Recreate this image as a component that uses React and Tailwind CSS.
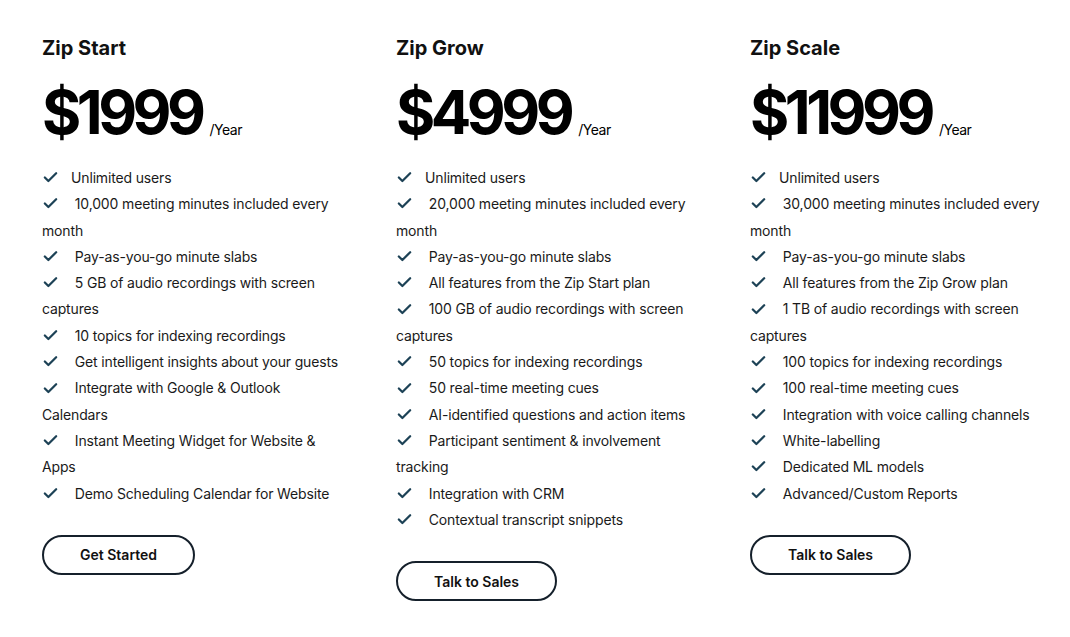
import { Check } from "lucide-react";

const plans = [
  {
    name: "Zip Start",
    price: "$1999",
    cta: "Get Started",
    features: [
      "Unlimited users",
      " 10,000 meeting minutes included every month",
      " Pay-as-you-go minute slabs",
      " 5 GB of audio recordings with screen captures",
      " 10 topics for indexing recordings",
      " Get intelligent insights about your guests",
      " Integrate with Google & Outlook Calendars",
      " Instant Meeting Widget for Website & Apps",
      " Demo Scheduling Calendar for Website",
    ],
  },
  {
    name: "Zip Grow",
    price: "$4999",
    cta: "Talk to Sales",
    features: [
      "Unlimited users",
      " 20,000 meeting minutes included every month",
      " Pay-as-you-go minute slabs",
      " All features from the Zip Start plan",
      " 100 GB of audio recordings with screen captures",
      " 50 topics for indexing recordings",
      " 50 real-time meeting cues",
      " AI-identified questions and action items",
      " Participant sentiment & involvement tracking",
      " Integration with CRM",
      " Contextual transcript snippets",
    ],
  },
  {
    name: "Zip Scale",
    price: "$11999",
    cta: "Talk to Sales",
    features: [
      "Unlimited users",
      " 30,000 meeting minutes included every month",
      " Pay-as-you-go minute slabs",
      " All features from the Zip Grow plan",
      " 1 TB of audio recordings with screen captures",
      " 100 topics for indexing recordings",
      " 100 real-time meeting cues",
      " Integration with voice calling channels",
      " White-labelling",
      " Dedicated ML models",
      " Advanced/Custom Reports",
    ],
  },
];

function Plan({ plan }) {
  return (
    <div className="w-[306px]">
      <h3 className="text-[20px] font-bold leading-[28px] text-[#111]">{plan.name}</h3>
      <div className="mt-[20px] flex items-end">
        <span className="text-[60px] font-bold leading-[60px] tracking-[-4.5px] text-black">
          {plan.price}
        </span>
        <span className="ml-[8px] mb-[2px] text-[14px] tracking-[-0.5px] text-black">/Year</span>
      </div>
      <ul className="mt-[23px] text-[14px] leading-[26.3px] tracking-[-0.15px] text-[#1a1a1a]">
        {plan.features.map((f, i) => (
          <li key={i}>
            <Check
              size={17}
              strokeWidth={3.2}
              className="inline-block text-[#1d4256] mr-[12px] -mt-[3px] align-middle"
            />
            <span className="whitespace-pre-wrap">{f}</span>
          </li>
        ))}
      </ul>
      <button className="mt-[28px] h-[40px] px-[36px] rounded-full border-2 border-[#15202b] text-[14px] font-semibold text-[#111]">
        {plan.cta}
      </button>
    </div>
  );
}

export default function App() {
  return (
    <div
      className="min-h-[637px] bg-white pl-[42px] pt-[34px] grid grid-cols-[354px_354px_320px] items-start"
      style={{ fontFamily: "Inter, 'Noto Sans', sans-serif" }}
    >
      {plans.map((p) => (
        <Plan key={p.name} plan={p} />
      ))}
    </div>
  );
}
